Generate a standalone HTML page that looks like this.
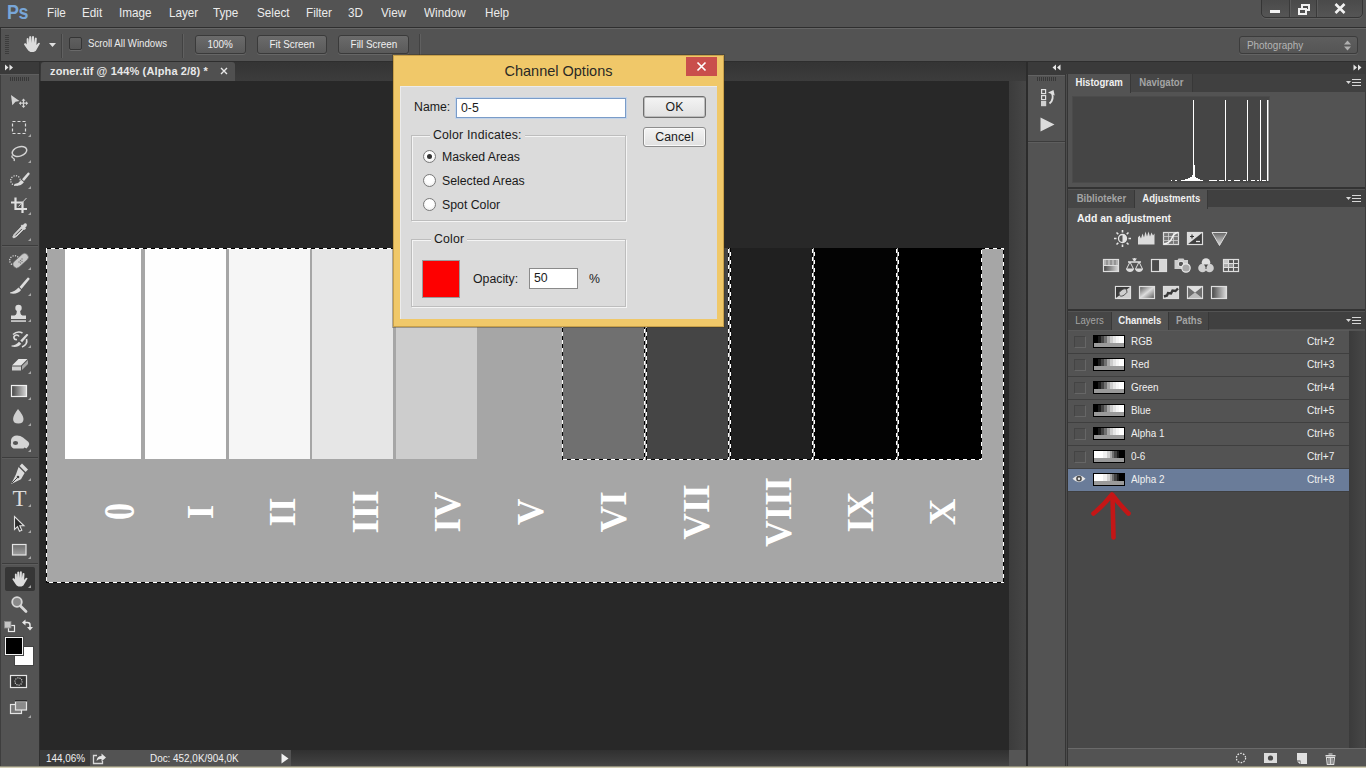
<!DOCTYPE html>
<html>
<head>
<meta charset="utf-8">
<title>Photoshop - Channel Options</title>
<style>
*{box-sizing:border-box;margin:0;padding:0}
html,body{width:1366px;height:768px;overflow:hidden;background:#535353}
body{position:relative;font-family:"Liberation Sans","DejaVu Sans",sans-serif;font-size:11px;color:#e4e4e4}
.abs{position:absolute}
#menubar{left:0;top:0;width:1366px;height:28px;background:#535353;border-bottom:1px solid #2f2f2f}
#menubar span.mi{position:absolute;top:5px;font-size:13px;color:#ececec;white-space:nowrap;transform:scaleX(.9);transform-origin:0 50%}
#pslogo{left:7px;top:1px;font-size:19.500px;font-weight:bold;color:#78a6d8;letter-spacing:-.5px;transform:scaleX(.92);transform-origin:0 50%}
#optbar{left:0;top:28px;width:1366px;height:34px;background:#535353;border-top:1px solid #666;border-bottom:1px solid #2e2e2e}
.btn{position:absolute;height:19px;border:1px solid #3a3a3a;border-radius:3px;background:linear-gradient(#6b6b6b,#5a5a5a);color:#f0f0f0;font-size:11px;text-align:center;line-height:17px;box-shadow:0 1px 0 #666}
#tabrow{left:40px;top:62px;width:986px;height:19px;background:linear-gradient(#343434,#3c3c3c)}
#doctab{left:41px;top:62px;width:194px;height:19px;border-radius:3px 3px 0 0;letter-spacing:.14px;background:#505050;color:#e8e8e8;font-weight:bold;font-size:11px;line-height:19px;padding-left:9px;white-space:nowrap}
#canvas{left:40px;top:81px;width:969px;height:669px;background:#282828}
#vscroll{left:1009px;top:81px;width:17px;height:669px;background:linear-gradient(90deg,#3c3c3c,#464646)}
#statusbar{left:40px;top:750px;width:969px;height:17px;background:linear-gradient(#303030,#3a3a3a 50%,#464646)}
#toolbar{left:0;top:62px;width:40px;height:706px;background:#535353;border-right:1px solid #303030}
#rightsep{left:1026px;top:62px;width:2px;height:706px;background:#2c2c2c}
#iconstrip{left:1028px;top:62px;width:37px;height:706px;background:#535353;border-top:13px solid #3a3a3a;box-shadow:inset 0 1px 0 #626262}
#rpanels{left:1065px;top:62px;width:301px;height:706px;background:#535353;border-left:1px solid #353535;box-shadow:inset 1px 0 0 #4c4c4c,inset 2px 0 0 #353535}
#bottomline{left:0;top:766px;width:1366px;height:2px;background:#d2ceb6;border-top:1px solid #8f8c7a}

.vsep{position:absolute;top:5px;width:2px;height:24px;border-left:1px solid #424242;border-right:1px solid #606060}
#chk{left:69px;top:8px;width:13px;height:13px;border:1px solid #353535;border-radius:2px;background:linear-gradient(#5f5f5f,#555);box-shadow:0 1px 0 #6a6a6a}
#wsdd{left:1239px;top:7px;width:119px;height:18px;border:1px solid #3c3c3c;border-radius:3px;background:linear-gradient(#5e5e5e,#555);color:#b4b4b4;font-size:11px;line-height:16px;padding-left:7px;box-shadow:0 1px 0 #636363}
#winctl{left:1261px;top:-1px;width:102px;height:19px;border:1px solid #353535;border-radius:0 0 5px 5px;background:linear-gradient(#4a4a4a,#555);box-shadow:0 1px 0 #606060}
#winctl i{position:absolute;top:0;width:1px;height:17px;background:#3a3a3a;box-shadow:1px 0 0 #5c5c5c}

#dlg{left:393px;top:55px;width:331px;height:272px;background:#f0c869;border:1px solid #c8a04a;box-shadow:0 0 0 1px rgba(60,50,20,.35);font-family:"Liberation Sans","DejaVu Sans",sans-serif;color:#1a1a1a;font-size:12.300px}
#dlg .title{position:absolute;left:0;top:4px;width:329px;text-align:center;font-size:14.500px;color:#2a2a26;line-height:22px}
#dlg .close{position:absolute;left:292px;top:1px;width:31px;height:19px;background:#c94f4c}
#dlg .body{position:absolute;left:6px;top:30px;width:317px;height:233px;background:#dbdbdb;box-shadow:inset 1px 1px 0 #ececec}
#dlg .t{position:absolute;white-space:nowrap;line-height:15px;margin-top:1px}
#dlg .inp{position:absolute;background:#fff;border:1px solid #7a9cc8;line-height:15px;padding:2px 0 0 4px}
#dlg .wbtn{position:absolute;border:1px solid #8e8e8e;border-radius:3px;background:linear-gradient(#f4f4f4,#e0e0e0);text-align:center;line-height:18px;box-shadow:inset 0 0 0 1px #fafafa}
#dlg .grp{position:absolute;border:1px solid #bdbdbd;box-shadow:inset 1px 1px 0 #f4f4f4,1px 1px 0 #f4f4f4}
#dlg .leg{position:absolute;background:#dbdbdb;padding:0 3px;white-space:nowrap;line-height:15px;margin-top:1px;letter-spacing:.2px}
#dlg .rad{position:absolute;width:13px;height:13px;border-radius:50%;border:1px solid #7a7a7a;background:radial-gradient(circle at 50% 40%,#fff 40%,#e4e4e4)}
#dlg .rad.on:after{content:"";position:absolute;left:3px;top:3px;width:5px;height:5px;border-radius:50%;background:#333}

.ptabrow{position:absolute;left:1068px;width:298px;height:18px;background:#404040}
.ptab{position:absolute;top:0;height:18px;line-height:17px;font-size:11px;text-align:center;color:#a4a4a4;background:#464646;border-right:1px solid #383838;font-weight:bold}
.ptab.on{background:#535353;color:#f0f0f0;height:19px}
.hsep{position:absolute;left:1068px;width:298px;height:2px;background:#333}
.crow{position:absolute;left:1068px;width:281px;height:23px;background:#535353;border-bottom:1px solid #3f3f3f;font-size:11px;color:#f0f0f0}
.crow .eye{position:absolute;left:6px;top:5px;width:12px;height:12px;border:1px solid #444;border-right-color:#666;border-bottom-color:#666;background:#505050}
.crow .th{position:absolute;left:25px;top:4px;width:32px;height:13px;border:1px solid #000;background:#9a9a9a}
.crow .th i{position:absolute;left:0;top:0;width:30px;height:7px}
.crow .nm{position:absolute;left:63px;top:0;line-height:21px;white-space:nowrap;transform:scaleX(.9);transform-origin:0 50%}
.crow .sc{position:absolute;left:239px;top:0;line-height:21px;white-space:nowrap;transform:scaleX(.92);transform-origin:0 50%}
.gA{background:linear-gradient(90deg,#000 0 12%,#1c1c1c 12% 22%,#444 22% 32%,#707070 32% 42%,#a6a6a6 42% 52%,#cdcdcd 52% 62%,#e6e6e6 62% 72%,#f6f6f6 72% 82%,#fff 82%)}
.gB{background:linear-gradient(90deg,#fff 0 30%,#f0f0f0 30% 42%,#d0d0d0 42% 52%,#a6a6a6 52% 60%,#707070 60% 68%,#444 68% 76%,#1c1c1c 76% 84%,#000 84%)}

.ptab b{display:inline-block;transform:scaleX(.87);transform-origin:50% 50%;font-weight:inherit;white-space:nowrap}
.cx{display:inline-block;transform:scaleX(.9);transform-origin:50% 50%;font-weight:inherit;white-space:nowrap}
.cl{display:inline-block;transform:scaleX(.9);transform-origin:0 50%;white-space:nowrap}
</style>
</head>
<body>
<div id="menubar" class="abs">
  <div id="pslogo" class="abs">Ps</div>
  <span class="mi" style="left:47px">File</span>
  <span class="mi" style="left:82px">Edit</span>
  <span class="mi" style="left:119px">Image</span>
  <span class="mi" style="left:169px">Layer</span>
  <span class="mi" style="left:213px">Type</span>
  <span class="mi" style="left:257px">Select</span>
  <span class="mi" style="left:306px">Filter</span>
  <span class="mi" style="left:348px">3D</span>
  <span class="mi" style="left:381px">View</span>
  <span class="mi" style="left:424px">Window</span>
  <span class="mi" style="left:485px">Help</span>
</div>
<div id="winctl" class="abs"><i style="left:27px"></i><i style="left:54px"></i>
<svg class="abs" style="left:0;top:0" width="100" height="18"><g fill="#f2f2f2"><rect x="8" y="10" width="10" height="3"/><path d="M36 8h9v7h-9z M38 10v3h5v-3z" fill-rule="evenodd"/><path d="M39 4h9v7h-3v-2h1v-3h-5v2h-2z" fill-rule="evenodd"/></g><path d="M73.500 4 L82.500 13 M82.500 4 L73.500 13" stroke="#f2f2f2" stroke-width="2.6"/></svg></div>
<div id="optbar" class="abs">
  <svg class="abs" style="left:5px;top:6px" width="6" height="20"><g fill="#3c3c3c"><rect x="0" y="0" width="4" height="1"/><rect x="0" y="2" width="4" height="1"/><rect x="0" y="4" width="4" height="1"/><rect x="0" y="6" width="4" height="1"/><rect x="0" y="8" width="4" height="1"/><rect x="0" y="10" width="4" height="1"/><rect x="0" y="12" width="4" height="1"/><rect x="0" y="14" width="4" height="1"/><rect x="0" y="16" width="4" height="1"/><rect x="0" y="18" width="4" height="1"/></g></svg>
  <svg class="abs" style="left:22px;top:5px" width="20" height="20" viewBox="0 0 18 18"><path d="M4.2 9.5 L4.2 4.2 Q5 3.2 5.9 4.2 L6.2 8 L6.5 2.4 Q7.4 1.4 8.3 2.4 L8.5 8 L9 2.2 Q9.9 1.2 10.8 2.2 L10.8 8 L11.6 3.6 Q12.5 2.8 13.3 3.8 L13 10 L14.6 8 Q15.8 7.4 16.2 8.6 L13.4 13.4 Q12.6 15.8 10.5 16.2 L7.6 16.2 Q5.6 15.6 4.6 13.6 L1.8 9.4 Q2 8 3.3 8.4 Z" fill="#dcdcdc"/></svg>
  <svg class="abs" style="left:49px;top:14px" width="7" height="4"><path d="M0 0H7L3.5 4Z" fill="#e0e0e0"/></svg>
  <div class="vsep" style="left:61px"></div>
  <div id="chk" class="abs"></div>
  <div class="abs" style="left:88px;top:8px;font-size:11px;color:#ececec;white-space:nowrap;transform:scaleX(.88);transform-origin:0 50%">Scroll All Windows</div>
  <div class="vsep" style="left:182px"></div>
  <div class="btn" style="left:195px;top:6px;width:51px"><span class="cx">100%</span></div>
  <div class="btn" style="left:257px;top:6px;width:70px"><span class="cx">Fit Screen</span></div>
  <div class="btn" style="left:338px;top:6px;width:71px"><span class="cx">Fill Screen</span></div>
  <div class="vsep" style="left:419px"></div>
  <div id="wsdd" class="abs"><span class="cl">Photography</span><svg class="abs" style="right:6px;top:3px" width="7" height="11"><path d="M0 4.5H7L3.5 0.5Z M0 6.5H7L3.5 10.5Z" fill="#b0b0b0"/></svg></div>
</div>
<div id="tabrow" class="abs"></div>
<div id="doctab" class="abs">zoner.tif @ 144% (Alpha 2/8) *<svg class="abs" style="left:179px;top:5px" width="8" height="8"><path d="M1 1l6 6M7 1l-6 6" stroke="#e8e8e8" stroke-width="1.400"/></svg></div>
<div id="canvas" class="abs"></div>
<svg id="docsvg" class="abs" style="left:0;top:0" width="1026" height="768" viewBox="0 0 1026 768">
<rect x="46" y="248" width="958" height="335" fill="#a6a6a6"/>
<rect x="65" y="248" width="76" height="211" fill="#ffffff"/>
<rect x="145" y="248" width="81" height="211" fill="#fefefe"/>
<rect x="229" y="248" width="81" height="211" fill="#f6f6f6"/>
<rect x="312" y="248" width="81" height="211" fill="#e6e6e6"/>
<rect x="396" y="248" width="81" height="211" fill="#cdcdcd"/>
<rect x="563" y="248" width="81" height="211" fill="#707070"/>
<rect x="647" y="248" width="81" height="211" fill="#454545"/>
<rect x="731" y="248" width="81" height="211" fill="#202020"/>
<rect x="815" y="248" width="81" height="211" fill="#030303"/>
<rect x="899" y="248" width="82" height="211" fill="#000000"/>
<g shape-rendering="crispEdges" fill="none" stroke-width="1"><path d="M562.5 248V459.500H644.5V248 M646.5 248V459.500H728.5V248 M730.5 248V459.500H812.5V248 M814.5 248V459.500H896.5V248 M898.5 248V459.500H981.5V248 M562.500 248.500H46.500V582.500H1003.500V248.500H981.500" stroke="#fff"/><path d="M562.5 248V459.500H644.5V248 M646.5 248V459.500H728.5V248 M730.5 248V459.500H812.5V248 M814.5 248V459.500H896.5V248 M898.5 248V459.500H981.5V248 M562.500 248.500H46.500V582.500H1003.500V248.500H981.500" stroke="#000" stroke-dasharray="4 4"/></g>
<g font-family="Liberation Serif,serif" font-weight="bold" font-size="37" fill="#fff" text-anchor="middle">
<text transform="translate(134 511.500) rotate(-90) scale(.92 1.22)">0</text>
<text transform="translate(212.5 512) rotate(-90)">I</text>
<text transform="translate(295 512) rotate(-90)">II</text>
<text transform="translate(378 512) rotate(-90)">III</text>
<text transform="translate(460 512) rotate(-90)">IV</text>
<text transform="translate(543 512) rotate(-90)">V</text>
<text transform="translate(626 512) rotate(-90)">VI</text>
<text transform="translate(709 512) rotate(-90)">VII</text>
<text transform="translate(791 512) rotate(-90)">VIII</text>
<text transform="translate(873 512) rotate(-90)">IX</text>
<text transform="translate(955 512) rotate(-90)">X</text>
</g>
</svg>
<div id="vscroll" class="abs"></div>
<div id="statusbar" class="abs"></div>
<div class="abs" style="left:40px;top:750px;width:251px;height:17px;background:#535353"></div>
<div class="abs" style="left:40px;top:750px;width:50px;height:17px;background:#3a3a3a"></div>
<div class="abs" style="left:46px;top:752px;font-size:11px;color:#f0f0f0;white-space:nowrap;transform:scaleX(.9);transform-origin:0 50%">144,06%</div>
<svg class="abs" style="left:92px;top:752px" width="15" height="13" viewBox="0 0 15 13"><path d="M5 3.500H1.500V11.500H10.500V9" fill="none" stroke="#d8d8d8" stroke-width="1.300"/><path d="M4.500 9q.5-5 5-5V1.500l4.500 4-4.500 4V7q-3-.5-5 2z" fill="#e4e4e4"/></svg>
<div class="abs" style="left:150px;top:752px;font-size:11px;color:#f0f0f0;white-space:nowrap;transform:scaleX(.9);transform-origin:0 50%">Doc: 452,0K/904,0K</div>
<svg class="abs" style="left:281px;top:753px" width="8" height="11"><path d="M.5.5v10l7-5z" fill="#f0f0f0"/></svg>
<div class="abs" style="left:1009px;top:750px;width:17px;height:17px;background:#555"></div>
<div id="toolbar" class="abs"></div>
<svg id="toolsvg" class="abs" style="left:0;top:0" width="40" height="768" viewBox="0 0 40 768">
<rect x="0" y="62" width="39" height="12" fill="#3a3a3a"/><rect x="0" y="74" width="1" height="694" fill="#3e3e3e"/>
<rect x="0" y="74" width="39" height="1" fill="#5e5e5e"/>
<path d="M5 64.500l3.500 3-3.500 3z M9.500 64.500l3.500 3-3.500 3z" fill="#e6e6e6"/>
<g fill="#383838"><rect x="10" y="77" width="1" height="4"/><rect x="12" y="77" width="1" height="4"/><rect x="14" y="77" width="1" height="4"/><rect x="16" y="77" width="1" height="4"/><rect x="18" y="77" width="1" height="4"/><rect x="20" y="77" width="1" height="4"/><rect x="22" y="77" width="1" height="4"/><rect x="24" y="77" width="1" height="4"/><rect x="26" y="77" width="1" height="4"/><rect x="28" y="77" width="1" height="4"/></g>
<!-- separators -->
<g><rect x="2" y="245" width="36" height="1" fill="#3c3c3c"/><rect x="2" y="246" width="36" height="1" fill="#5c5c5c"/>
<rect x="2" y="457" width="36" height="1" fill="#3c3c3c"/><rect x="2" y="458" width="36" height="1" fill="#5c5c5c"/>
<rect x="2" y="563" width="36" height="1" fill="#3c3c3c"/><rect x="2" y="564" width="36" height="1" fill="#5c5c5c"/></g>
<!-- corner flyout triangles -->
<g fill="#a8a8a8">
<path d="M31 134v3h-3z"/><path d="M31 160v3h-3z"/><path d="M31 186v3h-3z"/><path d="M31 212v3h-3z"/><path d="M31 238v3h-3z"/>
<path d="M31 267v3h-3z"/><path d="M31 293v3h-3z"/><path d="M31 319v3h-3z"/><path d="M31 345v3h-3z"/><path d="M31 371v3h-3z"/><path d="M31 397v3h-3z"/><path d="M31 423v3h-3z"/><path d="M31 449v3h-3z"/>
<path d="M31 478v3h-3z"/><path d="M31 504v3h-3z"/><path d="M31 530v3h-3z"/><path d="M31 556v3h-3z"/><path d="M31 715v3h-3z"/>
</g>
<!-- move -->
<path d="M11 95l8.500 6-4 .8-3.200 3.400z" fill="#d4d4d4"/>
<path d="M23.500 98.500l2 2.200h-1.400v1.900h1.900v-1.400l2.200 2-2.200 2v-1.400h-1.900v1.900h1.400l-2 2.200-2-2.200h1.400v-1.900h-1.900v1.400l-2.200-2 2.200-2v1.400h1.900v-1.900h-1.400z" fill="#d4d4d4"/>
<!-- marquee -->
<rect x="12.500" y="121.500" width="13" height="12" fill="none" stroke="#dcdcdc" stroke-width="1.200" stroke-dasharray="3 2"/>
<!-- lasso -->
<ellipse cx="19.500" cy="151.500" rx="7.500" ry="4.600" transform="rotate(-18 19.500 151.500)" fill="none" stroke="#d4d4d4" stroke-width="1.500"/>
<path d="M12.500 155.500q-1.500 1.500.5 2.500t1 3" fill="none" stroke="#d4d4d4" stroke-width="1.300"/>
<!-- quick select -->
<circle cx="15.500" cy="180.500" r="4.800" fill="none" stroke="#e0e0e0" stroke-width="1.200" stroke-dasharray="1.200 1.300"/>
<path d="M28 172.500l-6 6.800 2 1.800 5.800-7.200q-.5-1.600-1.800-1.400z" fill="#dcdcdc"/>
<path d="M14.500 184q4.500-.8 7-4l2.400 2.200q-3.400 4.400-9.400 3.300z" fill="#dcdcdc"/>
<!-- crop -->
<path d="M15.500 197.500v11.500h11.500 M11 202.500h11.500v10.500" fill="none" stroke="#e0e0e0" stroke-width="2.200"/>
<path d="M26.500 198l-8 8.500" stroke="#cfcfcf" stroke-width="1"/>
<!-- eyedropper -->
<path d="M24.500 223.500q1.800-.6 2.400 1.200.3 1.600-1.600 2.900l.7.900-1.400 1.400-4-4 1.400-1.400.9.800q1-1.500 1.600-1.800z" fill="#d8d8d8"/>
<path d="M21.500 226.500l2.500 2.500-7.500 7.500-2.800 1.500-1-1 1.500-2.800z" fill="#d0d0d0" stroke="#d8d8d8" stroke-width=".8"/><path d="M21.800 229l-6.500 6.500" stroke="#4a4a4a" stroke-width="1"/>
<!-- healing -->
<circle cx="14.500" cy="260.500" r="4.800" fill="none" stroke="#e0e0e0" stroke-width="1.200" stroke-dasharray="1.200 1.300"/>
<rect x="11.500" y="257" width="18" height="7.500" rx="3.600" transform="rotate(-42 20.500 260.500)" fill="#c8c8c8" stroke="#6a6a6a" stroke-width=".6"/>
<g fill="#777"><circle cx="19" cy="262" r=".7"/><circle cx="20.500" cy="260.500" r=".7"/><circle cx="22" cy="259" r=".7"/><circle cx="20.500" cy="263" r=".7"/><circle cx="22" cy="261.500" r=".7"/></g>
<!-- brush -->
<path d="M27.800 277.500l-8.300 9.500 2 1.900 8.200-9.800q-.4-1.800-1.900-1.600z" fill="#dcdcdc"/>
<path d="M10 292.500q5-1 8.500-5l2.600 2.400q-4 5-11.100 3.400z" fill="#dcdcdc"/>
<!-- stamp -->
<circle cx="18.500" cy="308" r="3.200" fill="#dcdcdc"/><path d="M17 310h3l.5 3.500q.3 1.500 2 2h3.500v3.500h-15v-3.500h3.500q1.700-.5 2-2z" fill="#dcdcdc"/>
<rect x="11" y="320.300" width="15" height="1.500" fill="#dcdcdc"/>
<!-- history brush -->
<path d="M13 334.500q4.500-4 9.500-1.500 M26.500 339q1.500 5.500-4.500 8 M17 339.500q-2.500.5-3-1.500t1.500-2.800q2.500-.6 3.500 1.300" fill="none" stroke="#dcdcdc" stroke-width="1.600"/>
<path d="M26.500 334l-6.200 6.600 1.800 1.700 6.200-7.200q-.5-1.400-1.800-1.100z" fill="#dcdcdc"/>
<path d="M11.500 345.500q4.500-.3 7.500-3.800l2.200 2q-3.500 4.300-9.700 2.800z" fill="#dcdcdc"/>
<!-- eraser -->
<path d="M12 365.500l6.500-6.500h9l-6.500 6.500z" fill="#e6e6e6"/><path d="M12 366.500h9v4h-9z" fill="#cfcfcf"/><path d="M22 366l6-6v4l-6 6z" fill="#a8a8a8"/>
<!-- gradient -->
<defs><linearGradient id="gr1" x1="0" x2="1" y1="0" y2="0"><stop offset="0" stop-color="#444"/><stop offset="1" stop-color="#d8d8d8"/></linearGradient>
<linearGradient id="gr2" x1="0" x2="0" y1="0" y2="1"><stop offset="0" stop-color="#6c6c6c"/><stop offset="1" stop-color="#a0a0a0"/></linearGradient></defs>
<rect x="11.500" y="385.500" width="15" height="11" fill="url(#gr1)" stroke="#f0f0f0" stroke-width="1.200"/>
<!-- blur drop -->
<path d="M18 409q5.500 6.500 5.500 10 0 4.500-5.200 4.500t-5.200-4.500q0-3.500 4.900-10z" fill="#cfcfcf"/>
<!-- dodge -->
<path d="M11 440q1-4.500 6-4.500 3.500 0 6 2l5.500 4.500q1.500 2 0 4l-2 2.500-2-1-1 1h-10q-3.500-2-2.500-5.500z" fill="#d4d4d4"/>
<ellipse cx="15.500" cy="443" rx="2.600" ry="2" fill="#555"/>
<!-- pen -->
<path d="M22 463.500l6 6-2.400 2.400-6-6z" fill="#dcdcdc"/>
<path d="M18.600 467l6 6-3.600 6.200-9.800 4.800 4.800-9.800z" fill="#dcdcdc"/>
<path d="M12 483l5.500-5.500" stroke="#444" stroke-width="1"/><circle cx="18" cy="477" r="1.300" fill="#444"/>
<!-- type -->
<text x="19.500" y="505.500" font-family="Liberation Serif,serif" font-size="23" fill="#dcdcdc" text-anchor="middle">T</text>
<!-- path select -->
<path d="M14.500 516.500v13l3-2.800 2 4.600 2.300-1-2-4.500h4.200z" fill="#2a2a2a" stroke="#e0e0e0" stroke-width="1.100"/>
<!-- rectangle -->
<rect x="12.500" y="544.500" width="13.500" height="10.500" fill="url(#gr2)" stroke="#e4e4e4" stroke-width="1.200"/>
<!-- hand selected -->
<rect x="5" y="567" width="30" height="24" rx="2" fill="#363636"/>
<g transform="translate(10.500 569.500) scale(1.050)"><path d="M4.200 9.500 L4.200 4.200 Q5 3.200 5.900 4.200 L6.200 8 L6.500 2.400 Q7.400 1.400 8.300 2.400 L8.500 8 L9 2.200 Q9.900 1.200 10.800 2.200 L10.800 8 L11.600 3.600 Q12.500 2.800 13.300 3.800 L13 10 L14.600 8 Q15.800 7.400 16.200 8.600 L13.400 13.400 Q12.600 15.800 10.500 16.200 L7.600 16.200 Q5.600 15.600 4.600 13.600 L1.800 9.400 Q2 8 3.300 8.400 Z" fill="#dcdcdc"/></g>
<path d="M31 585v3h-3z" fill="#a8a8a8"/>
<!-- zoom -->
<circle cx="17" cy="602" r="4.800" fill="#8a8a8a" stroke="#d8d8d8" stroke-width="1.800"/>
<path d="M20.500 606l5.500 5.500" stroke="#d8d8d8" stroke-width="2.800" stroke-linecap="round"/>
<!-- default colors -->
<rect x="8.500" y="625.500" width="6" height="6" fill="#535353" stroke="#e8e8e8" stroke-width="1.200"/>
<rect x="4.500" y="621.500" width="6.500" height="6.500" fill="#c4c4c4" stroke="#8a8a8a" stroke-width=".8"/>
<!-- swap -->
<path d="M25 622.500h2.500q2.500 0 2.500 2.500v2" fill="none" stroke="#e8e8e8" stroke-width="1.500"/>
<path d="M22 622.500l3.500-3v6z M30 630.500l-3-3.500h6z" fill="#e8e8e8"/>
<!-- swatches -->
<rect x="14.500" y="646.500" width="19" height="19" fill="#fff" stroke="#444" stroke-width="1"/>
<rect x="4.500" y="636.500" width="19" height="19" fill="#000" stroke="#444" stroke-width="1"/>
<rect x="5.500" y="637.500" width="17" height="17" fill="#000" stroke="#f4f4f4" stroke-width="1"/>
<!-- quick mask -->
<rect x="10.500" y="675.500" width="16" height="12" fill="#333" stroke="#e4e4e4" stroke-width="1.200"/>
<circle cx="18.500" cy="681.500" r="3.600" fill="none" stroke="#f0f0f0" stroke-width="1.100" stroke-dasharray="1 1.200"/>
<!-- screen mode -->
<rect x="10.500" y="704.500" width="11" height="9" fill="#777" stroke="#e4e4e4" stroke-width="1.200"/>
<rect x="15.500" y="701.500" width="11" height="8.500" fill="#8a8a8a" stroke="#e4e4e4" stroke-width="1.200"/>
<rect x="15" y="700" width="12" height="1.500" fill="#2c2c2c"/>
</svg>

<div id="rightsep" class="abs"></div>
<div id="iconstrip" class="abs"></div>
<div id="rpanels" class="abs"></div>
<div class="abs" style="left:1028px;top:62px;width:338px;height:12px;background:#3a3a3a"></div>
<div class="abs" style="left:1068px;top:62px;width:298px;height:12px;background:#3a3a3a"></div>
<div class="abs" style="left:1028px;top:141px;width:37px;height:2px;background:#3c3c3c;border-bottom:1px solid #5e5e5e"></div>
<svg class="abs" style="left:1028px;top:62px" width="338" height="90" viewBox="1028 62 338 90">
<path d="M1056 64.500l-3.500 3 3.500 3z M1060.500 64.500l-3.500 3 3.500 3z" fill="#e6e6e6"/>
<path d="M1353.500 64.500l3.500 3-3.500 3z M1358 64.500l3.500 3-3.500 3z" fill="#e6e6e6"/>
<g fill="#383838"><rect x="1037" y="77" width="1" height="4"/><rect x="1039" y="77" width="1" height="4"/><rect x="1041" y="77" width="1" height="4"/><rect x="1043" y="77" width="1" height="4"/><rect x="1045" y="77" width="1" height="4"/><rect x="1047" y="77" width="1" height="4"/><rect x="1049" y="77" width="1" height="4"/><rect x="1051" y="77" width="1" height="4"/><rect x="1053" y="77" width="1" height="4"/><rect x="1055" y="77" width="1" height="4"/></g>
<g fill="none" stroke="#e0e0e0" stroke-width="1.200"><rect x="1041.600" y="89.600" width="4" height="4"/><rect x="1041.600" y="95.600" width="4" height="4"/></g><rect x="1041" y="101" width="5.200" height="5.200" fill="#cfcfcf"/>
<path d="M1049.500 103.500q5-4 2.200-11" fill="none" stroke="#e0e0e0" stroke-width="1.800"/><path d="M1048 92.500l5.500-2.500 1.200 5.500z" fill="#e0e0e0"/>
<path d="M1040.500 117.500l14 7-14 7z" fill="#dcdcdc"/>
</svg>
<div class="ptabrow" style="top:74px"><div class="ptab on" style="left:0;width:63px"><b>Histogram</b></div><div class="ptab" style="left:63px;width:62px"><b>Navigator</b></div></div>
<div class="abs" style="left:1072px;top:96px;width:198px;height:87px;background:#454545;border:1px solid #4b4b4b"></div>
<svg class="abs" style="left:1072px;top:96px" width="198" height="87" viewBox="1072 96 198 87"><g fill="#fff">
<rect x="1193" y="100" width="1" height="81"/><rect x="1194" y="165" width="1" height="16"/><rect x="1192" y="175" width="1" height="6"/>
<rect x="1225" y="100" width="1" height="81"/><rect x="1247" y="100" width="1" height="81"/><rect x="1260" y="100" width="1" height="81"/><rect x="1267" y="100" width="1.500" height="81"/>
<path d="M1171 181v-1h1v1z M1175 181v-1h2v1z M1181 181v-1h4v-1h3v-1h2v-1h2v4z M1195 181v-4h1v1h2v1h2v1h3v1z M1209 181v-1h8v1z M1219 181v-1h5v1z M1228 181v-1h3v1z M1234 181v-1h6v1z M1243 181v-1h3v1z M1251 181v-1h4v1z M1257 181v-1h2v1z M1262 181v-1h4v1z"/>
</g></svg>
<div class="hsep" style="top:187px"></div>
<div class="ptabrow" style="top:190px;height:17px"><div class="ptab" style="left:0;width:67px"><b>Biblioteker</b></div><div class="ptab on" style="left:67px;width:73px"><b>Adjustments</b></div></div>
<div class="abs" style="left:1077px;top:212px;font-size:11px;font-weight:bold;color:#f4f4f4;white-space:nowrap;transform:scaleX(.95);transform-origin:0 50%">Add an adjustment</div>
<div class="hsep" style="top:309px"></div>
<div class="ptabrow" style="top:312px;height:17px"><div class="ptab" style="left:0;width:44px;font-weight:normal"><b>Layers</b></div><div class="ptab on" style="left:44px;width:57px"><b>Channels</b></div><div class="ptab" style="left:101px;width:40px"><b>Paths</b></div></div>
<div class="abs" style="left:1068px;top:330px;width:281px;height:418px;background:#484848;border-top:1px solid #5a5a5a"></div>
<div class="abs" style="left:1349px;top:331px;width:17px;height:417px;background:linear-gradient(90deg,#3b3b3b,#484848)"></div>
<div class="abs" style="left:1365px;top:74px;width:1px;height:694px;background:#3c3c3c"></div>
<div class="crow" style="top:331px;"><div class="eye"></div><div class="th"><i class="gA"></i></div><div class="nm">RGB</div><div class="sc">Ctrl+2</div></div>
<div class="crow" style="top:354px;"><div class="eye"></div><div class="th"><i class="gA"></i></div><div class="nm">Red</div><div class="sc">Ctrl+3</div></div>
<div class="crow" style="top:377px;"><div class="eye"></div><div class="th"><i class="gA"></i></div><div class="nm">Green</div><div class="sc">Ctrl+4</div></div>
<div class="crow" style="top:400px;"><div class="eye"></div><div class="th"><i class="gA"></i></div><div class="nm">Blue</div><div class="sc">Ctrl+5</div></div>
<div class="crow" style="top:423px;"><div class="eye"></div><div class="th"><i class="gA"></i></div><div class="nm">Alpha 1</div><div class="sc">Ctrl+6</div></div>
<div class="crow" style="top:446px;"><div class="eye"></div><div class="th"><i class="gB"></i></div><div class="nm">0-6</div><div class="sc">Ctrl+7</div></div>
<div class="crow" style="top:469px;background:#6a7c99;"><svg style="position:absolute;left:4px;top:5px" width="14" height="9.330" viewBox="0 0 15 10"><path d="M.5 5Q7.500-2.500 14.500 5 7.500 12.500.5 5z" fill="#e8e8e8"/><circle cx="7.500" cy="5" r="3" fill="#4a4a4a"/><circle cx="7.500" cy="5" r="1.300" fill="#e8e8e8"/></svg><div class="th"><i class="gB"></i></div><div class="nm">Alpha 2</div><div class="sc">Ctrl+8</div></div>
<svg class="abs" style="left:1085px;top:490px" width="50" height="52" viewBox="1085 490 50 52"><path d="M1113.500 537.500L1112.500 496 M1093.500 513.500q10-8 18.500-19 7.500 10 16.500 19" fill="none" stroke="#c41616" stroke-width="4.600" stroke-linecap="round" stroke-linejoin="round"/></svg>
<div class="abs" style="left:1068px;top:748px;width:298px;height:19px;background:#535353;border-top:1px solid #6a6a6a"></div>
<svg class="abs" style="left:1230px;top:749px" width="120" height="18" viewBox="1230 749 120 18">
<circle cx="1241" cy="758" r="4.600" fill="none" stroke="#e4e4e4" stroke-width="1.200" stroke-dasharray="1.600 1.300"/>
<rect x="1264" y="753" width="13" height="10" fill="#dcdcdc"/><circle cx="1270.500" cy="758" r="2.600" fill="#4a4a4a"/>
<path d="M1297 753h10v11h-6.500v-3.500h-3.500z" fill="#e0e0e0"/><path d="M1297 761.500l3 2.500v-2.500z" fill="#e0e0e0"/>
<path d="M1325.500 755h10v1.500h-10z M1328.500 753.500h4v1h-4z" fill="#e0e0e0"/><path d="M1326.500 757.500h8l-.8 7h-6.400z" fill="none" stroke="#e0e0e0" stroke-width="1.100"/><path d="M1329 758v6M1330.500 758v6M1332 758v6" stroke="#e0e0e0" stroke-width=".9"/>
</svg>
<svg class="abs" style="left:1068px;top:208px" width="298" height="100" viewBox="1068 208 298 100">
<defs>
<linearGradient id="ag1" x1="0" x2="1" y1="0" y2="0"><stop offset="0" stop-color="#444"/><stop offset="1" stop-color="#dcdcdc"/></linearGradient>
<linearGradient id="ag2" x1="0" x2="1" y1="0" y2="1"><stop offset="0" stop-color="#555"/><stop offset=".5" stop-color="#ddd"/><stop offset="1" stop-color="#555"/></linearGradient>
<linearGradient id="ag3" x1="0" x2="0" y1="0" y2="1"><stop offset="0" stop-color="#666"/><stop offset="1" stop-color="#dcdcdc"/></linearGradient>
</defs>
<circle cx="1122.500" cy="238.500" r="4" fill="#555" stroke="#e4e4e4" stroke-width="1.300"/><path d="M1122.500 234.500a4 4 0 0 1 0 8z" fill="#e4e4e4"/>
<g stroke="#e4e4e4" stroke-width="1.600"><path d="M1122.500 230v2.500M1122.500 244.500v2.500M1114 238.500h2.500M1128.500 238.500h2.500M1116.500 232.500l1.800 1.800M1126.700 242.700l1.800 1.800M1128.500 232.500l-1.800 1.800M1116.500 244.500l1.800-1.800"/></g>
<path d="M1138 244.500v-7l1.500-2 1.500 3 1.500-5 1.500 4 1.500-6 1.500 5 1.500-5 1.500 5 1.500-4 1.500 3 1.500-2v11z" fill="#dcdcdc"/>
<rect x="1163.5" y="232.5" width="15" height="12" fill="#777" stroke="#dedede" stroke-width="1.200"/>
<path d="M1168.500 232v13M1173.500 232v13M1163 236.500h16M1163 240.500h16" stroke="#cfcfcf" stroke-width=".8"/><path d="M1164 244q6-1 8-6t6-5.500" fill="none" stroke="#f4f4f4" stroke-width="1.500"/>
<rect x="1187.5" y="232.5" width="15" height="12" fill="#3e3e3e" stroke="#dedede" stroke-width="1.200"/>
<path d="M1188 244v-11h14z" fill="#dcdcdc"/><path d="M1190 236.500h4M1192 234.500v4" stroke="#333" stroke-width="1.200"/><path d="M1196 241.500h4" stroke="#e8e8e8" stroke-width="1.300"/>
<path d="M1212 232.500h15l-7.500 13z" fill="url(#ag3)" stroke="#dcdcdc" stroke-width="1" transform="rotate(0)"/>
<rect x="1103.5" y="259.5" width="15" height="12" fill="url(#ag1)" stroke="#dedede" stroke-width="1.200"/>
<rect x="1104" y="260" width="14" height="5" fill="#b4b4b4"/><path d="M1107 260v5M1111 260v5M1115 260v5" stroke="#8a8a8a" stroke-width="1.500"/><path d="M1103 265.500h16" stroke="#dedede" stroke-width="1"/>
<path d="M1134.500 258v3M1128 262h13M1134.500 262" stroke="#e0e0e0" stroke-width="1.600" fill="none"/><path d="M1130 262l-3.500 7h7zM1139 262l-3.500 7h7z" fill="none" stroke="#e0e0e0" stroke-width="1"/><path d="M1126 269h8q-1 3-4 3t-4-3zM1135 269h8q-1 3-4 3t-4-3z" fill="#dcdcdc"/><path d="M1132 258.500h5l-2.500 3z" fill="#e0e0e0"/>
<rect x="1151.5" y="259.5" width="15" height="12" fill="#4a4a4a" stroke="#dedede" stroke-width="1.200"/>
<rect x="1159" y="260" width="7" height="11" fill="#d8d8d8"/>
<path d="M1174.500 260h3l1-1.500h5l1 1.500h3.500v9h-13.500z" fill="#cfcfcf"/><circle cx="1181" cy="264" r="2.800" fill="#555" stroke="#eee" stroke-width="1"/><circle cx="1186" cy="268" r="4.200" fill="#a8a8a8" stroke="#e8e8e8" stroke-width="1.200"/>
<circle cx="1206" cy="262.500" r="4.300" fill="#e0e0e0"/><circle cx="1202.500" cy="268" r="4.300" fill="#cfcfcf"/><circle cx="1209.500" cy="268" r="4.300" fill="#cfcfcf"/><path d="M1204 264.500h4l-1.500 2.500v2h-1v-2z" fill="#4a4a4a"/>
<rect x="1223.5" y="259.5" width="15" height="12" fill="#555" stroke="#dedede" stroke-width="1.200"/>
<path d="M1228.500 259v13M1233.500 259v13M1223 263.500h16M1223 267.500h16" stroke="#dedede" stroke-width="1.100"/><rect x="1224" y="260" width="4" height="3" fill="#c8c8c8"/><rect x="1229" y="264" width="4" height="3" fill="#999"/><rect x="1224" y="264" width="4" height="3" fill="#aaa"/>
<rect x="1115.5" y="286.5" width="15" height="12" fill="#444" stroke="#dedede" stroke-width="1.200"/>
<path d="M1116 298v-11h14z" fill="#3a3a3a"/><path d="M1130 287v11h-14z" fill="#d0d0d0"/><ellipse cx="1123" cy="292.500" rx="4.500" ry="2.800" transform="rotate(-35 1123 292.500)" fill="#cfcfcf" stroke="#444" stroke-width=".8"/>
<rect x="1139.5" y="286.5" width="15" height="12" fill="url(#ag2)" stroke="#dedede" stroke-width="1.200"/>
<rect x="1163.5" y="286.5" width="15" height="12" fill="#d8d8d8" stroke="#dedede" stroke-width="1.200"/>
<path d="M1164 296.500l3-1 1-2.500 3 .5 1.500-3 3 .5 2.500-2.500" fill="none" stroke="#3a3a3a" stroke-width="2.400"/>
<rect x="1187.5" y="286.5" width="15" height="12" fill="#9a9a9a" stroke="#dedede" stroke-width="1.200"/>
<path d="M1188 287l7 5.500-7 5.500z" fill="#6e6e6e"/><path d="M1202 287l-7 5.500 7 5.500z" fill="#6e6e6e"/><path d="M1188 287h14l-7 5.500z" fill="#e0e0e0"/><path d="M1188 298h14l-7-5.500z" fill="#bdbdbd"/>
<rect x="1211.5" y="286.5" width="15" height="12" fill="url(#ag1)" stroke="#dedede" stroke-width="1.200"/>
</svg>
<svg class="abs" style="left:1346px;top:78px" width="16" height="10" viewBox="0 0 16 10"><path d="M0 3h5l-2.500 3z" fill="#d8d8d8"/><path d="M6 1.500h9M6 4.500h9M6 7.500h9" stroke="#d8d8d8" stroke-width="1.200"/></svg>
<svg class="abs" style="left:1346px;top:194px" width="16" height="10" viewBox="0 0 16 10"><path d="M0 3h5l-2.500 3z" fill="#d8d8d8"/><path d="M6 1.500h9M6 4.500h9M6 7.500h9" stroke="#d8d8d8" stroke-width="1.200"/></svg>
<svg class="abs" style="left:1346px;top:316px" width="16" height="10" viewBox="0 0 16 10"><path d="M0 3h5l-2.500 3z" fill="#d8d8d8"/><path d="M6 1.500h9M6 4.500h9M6 7.500h9" stroke="#d8d8d8" stroke-width="1.200"/></svg>
<div class="abs" style="left:0;top:28px;width:1px;height:34px;background:#333"></div>
<div id="bottomline" class="abs"></div>
<div id="dlg" class="abs">
  <div class="title">Channel Options</div>
  <div class="close"><svg width="31" height="19"><path d="M11.500 5.500l8 8M19.500 5.500l-8 8" stroke="#fff" stroke-width="1.700"/></svg></div>
  <div class="body">
    <div class="t" style="left:14px;top:13px">Name:</div>
    <div class="inp" style="left:56px;top:12px;width:170px;height:20px;box-shadow:0 0 0 1px #c3d3e8;padding-top:2px">0-5</div>
    <div class="wbtn" style="left:243px;top:10px;width:63px;height:22px;border-color:#6e6e6e;box-shadow:inset 0 0 0 1px #bcbcbc;line-height:21px">OK</div>
    <div class="wbtn" style="left:243px;top:41px;width:63px;height:20px;line-height:19px">Cancel</div>
    <div class="grp" style="left:11px;top:49px;width:215px;height:86px"></div>
    <div class="leg" style="left:30px;top:41px">Color Indicates:</div>
    <div class="rad on" style="left:23px;top:64px"></div><div class="t" style="left:42px;top:63px">Masked Areas</div>
    <div class="rad" style="left:23px;top:88px"></div><div class="t" style="left:42px;top:87px">Selected Areas</div>
    <div class="rad" style="left:23px;top:112px"></div><div class="t" style="left:42px;top:111px">Spot Color</div>
    <div class="grp" style="left:11px;top:153px;width:215px;height:68px"></div>
    <div class="leg" style="left:31px;top:145px">Color</div>
    <div class="abs" style="left:22px;top:174px;width:38px;height:38px;background:#fe0000;border:1px solid #9a9a9a"></div>
    <div class="t" style="left:73px;top:185px">Opacity:</div>
    <div class="inp" style="left:129px;top:182px;width:49px;height:21px;border-color:#8a8a8a">50</div>
    <div class="t" style="left:189px;top:185px">%</div>
  </div>
</div>
</body>
</html>
